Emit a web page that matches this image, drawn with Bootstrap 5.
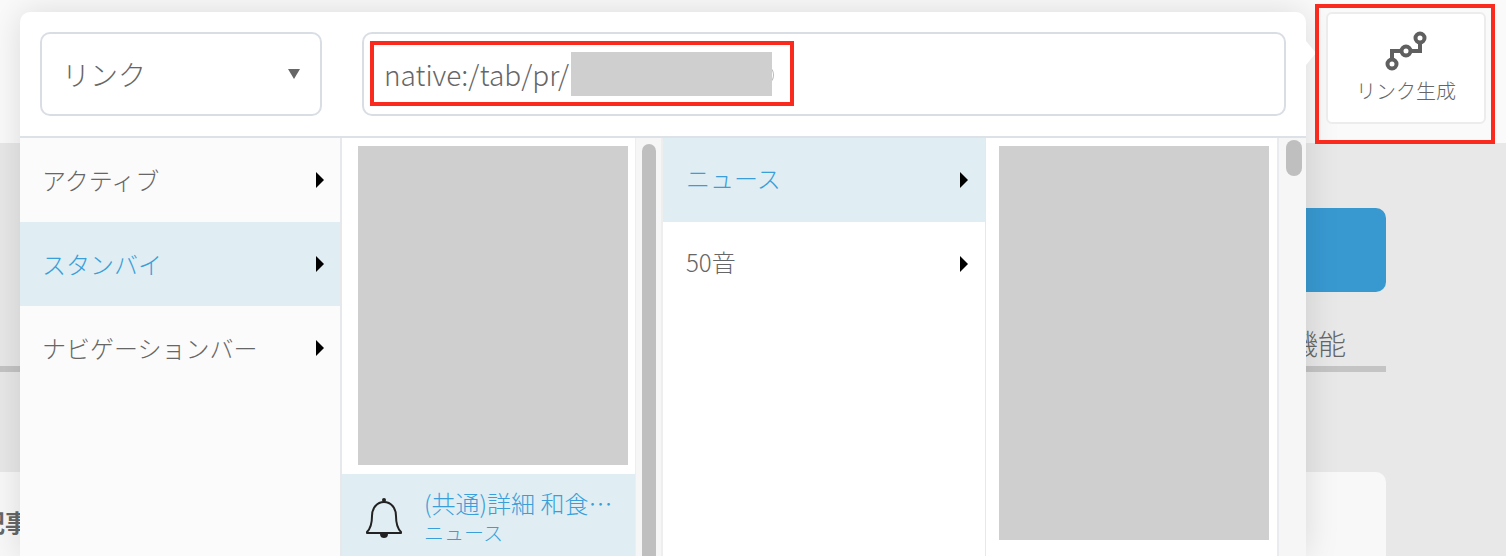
<!DOCTYPE html>
<html lang="ja">
<head>
  <meta charset="UTF-8" />
  <meta name="viewport" content="width=device-width, initial-scale=1.0" />
  <title>リンク生成</title>
  <link href="https://cdn.jsdelivr.net/npm/bootstrap@5.3.0/dist/css/bootstrap.min.css" rel="stylesheet" crossorigin="anonymous" />
  <style>
    html, body { height: 556px; overflow: hidden; }
    body { background: #e8e8e8; color: #666; font-family: "Noto Sans CJK JP", "Noto Sans", sans-serif; font-weight: 300; position: relative; }

    /* page behind the popover */
    .top-strip { height: 143px; background: #fafafa; }
    .back-main { padding: 65px 120px 0 0; }
    .back-btn { height: 84px; margin-left: 40px; background: #3899d1; border-radius: 10px; }
    .back-tabs { height: 80px; border-bottom: 6px solid #c4c4c4; font-size: 28px; line-height: 38px; padding: 32px 40px 0 0; }
    .back-card { margin: 100px 0 0 -20px; height: 200px; background: #f8f8f8; border-radius: 10px; font-size: 24px; font-weight: 700; padding-top: 30px; }
    .back-card span { display: block; margin-left: 1px; line-height: 40px; }

    /* link picker */
    .picker { position: absolute; left: 20px; top: 12px; width: 1286px; height: 544px; background: #fff; border-radius: 10px 10px 0 0; box-shadow: 0 0 34px rgba(0,0,0,.13); }
    .picker::after { content: ""; position: absolute; left: 100%; top: 29px; border-style: solid; border-width: 12px 0 12px 10px; border-color: transparent transparent transparent #fff; }
    .picker-head { height: 126px; padding: 20px; gap: 40px; border-bottom: 2px solid #dde2e8; }
    .type-select { width: 282px; height: 84px; border: 2px solid #d9dee5; border-radius: 10px; padding: 0 20px 0 20px; font-size: 28px; }
    .caret-down { width: 0; height: 0; border-style: solid; border-width: 10px 6px 0 6px; border-color: #666 transparent transparent transparent; }
    .url-box { height: 84px; border: 2px solid #d9dee5; border-radius: 10px; padding-left: 20px; font-size: 28px; }

    .picker-body { height: 418px; overflow: hidden; }
    .pane-root { width: 322px; background: #fbfbfb; border-right: 2px solid #e6e8ec; }
    .pane-tabs { width: 294px; padding-top: 8px; border-right: 1px solid #eee; }
    .pane-cats { width: 323px; border-right: 1px solid #e6e8ec; }
    .pane-preview { width: 291px; padding: 8px 8px 0 13px; }
    .menu-row { height: 84px; padding: 0 16px 0 22px; font-size: 24px; }
    .menu-row.picked, .tab-row { background: #e0edf3; color: #3a9fd8; }
    .pane-cats .menu-row { padding-left: 23px; padding-right: 17px; line-height: 1; }
    .pane-cats .menu-row span { margin-bottom: 4px; }
    .caret-right { width: 0; height: 0; border-style: solid; border-width: 8px 0 8px 8px; border-color: transparent transparent transparent #000; }
    .gray-mask { background: #cfcfcf; }
    .thumb-tabs { width: 270px; height: 319px; margin-left: 16px; }
    .tab-row { height: 90px; margin-top: 9px; padding-left: 23px; gap: 21px; }
    .tab-row svg { flex: none; margin-top: -3px; }
    .tab-text { padding-bottom: 4px; }
    .tab-title { font-size: 24px; line-height: 30px; }
    .tab-sub { font-size: 20px; line-height: 26px; margin-top: 2px; }
    .thumb-preview { width: 270px; height: 394px; }
    .scroll-track { background: #f6f6f6; }
    .track-a { width: 27px; padding: 6px 5px 0 6px; border-right: 2px solid #eee; }
    .track-b { width: 29px; padding: 2px 5px 0 7px; border-left: 2px solid #e9ebef; }
    .scroll-thumb { background: #bfbfbf; border-radius: 8px; }
    .thumb-long { height: 420px; }
    .thumb-short { height: 36px; width: 16px; }

    /* generate button */
    .gen-btn { position: absolute; left: 1326px; top: 12px; width: 160px; height: 112px; background: #fff; border: 2px solid #ececec; border-radius: 6px; font-size: 20px; color: #666; padding-top: 13px; }
    .gen-btn span { line-height: 28px; margin-top: 6px; }
    .gen-btn svg { margin-left: 2px; }

    /* annotation boxes and masks */
    .mark-box { position: absolute; border: 4px solid #fb2a1f; }
    .mark-url { left: 370px; top: 41px; width: 424px; height: 65px; }
    .mark-gen { left: 1315px; top: 4px; width: 180px; height: 140px; }
    .mask-url { position: absolute; left: 571px; top: 52px; width: 201px; height: 44px; }
    .mask-tail { position: absolute; left: 766px; top: 68px; width: 8px; height: 14px; border: 1px solid #bbb; border-radius: 50%; }
  </style>
</head>
<body>
  <div class="top-strip"></div>
  <div class="back-main">
    <div class="back-btn"></div>
    <div class="back-tabs text-end">機能</div>
    <div class="back-card"><span>記事</span></div>
  </div>

  <div class="picker">
    <div class="picker-head d-flex">
      <div class="type-select d-flex align-items-center justify-content-between flex-shrink-0">
        <span>リンク</span><i class="caret-down"></i>
      </div>
      <div class="url-box d-flex align-items-center flex-grow-1">native:/tab/pr/</div>
    </div>
    <div class="picker-body d-flex">
      <div class="pane-root flex-shrink-0">
        <div class="menu-row d-flex align-items-center justify-content-between"><span>アクティブ</span><i class="caret-right"></i></div>
        <div class="menu-row picked d-flex align-items-center justify-content-between"><span>スタンバイ</span><i class="caret-right"></i></div>
        <div class="menu-row d-flex align-items-center justify-content-between"><span>ナビゲーションバー</span><i class="caret-right"></i></div>
      </div>
      <div class="pane-tabs flex-shrink-0">
        <div class="thumb-tabs gray-mask"></div>
        <div class="tab-row d-flex align-items-center">
          <svg width="38" height="44" viewBox="0 0 38 44" fill="none" stroke="#222" stroke-width="2">
            <path d="M2 36c4-4 5-8 5-16 0-8 5-14 12-14s12 6 12 14c0 8 1 12 5 16v1H2z" stroke-linejoin="round"/>
            <circle cx="19" cy="4" r="2" fill="#222" stroke="none"/>
            <path d="M15 38c0 3 2 4 4 4s4-1 4-4z" fill="#222" stroke="none"/>
          </svg>
          <div class="tab-text text-nowrap">
            <div class="tab-title">(共通)詳細 和食…</div>
            <div class="tab-sub">ニュース</div>
          </div>
        </div>
      </div>
      <div class="scroll-track track-a flex-shrink-0"><div class="scroll-thumb thumb-long"></div></div>
      <div class="pane-cats flex-shrink-0">
        <div class="menu-row picked d-flex align-items-center justify-content-between"><span>ニュース</span><i class="caret-right"></i></div>
        <div class="menu-row d-flex align-items-center justify-content-between"><span>50音</span><i class="caret-right"></i></div>
      </div>
      <div class="pane-preview flex-shrink-0"><div class="thumb-preview gray-mask"></div></div>
      <div class="scroll-track track-b flex-grow-1"><div class="scroll-thumb thumb-short"></div></div>
    </div>
  </div>

  <div class="gen-btn d-flex flex-column align-items-center">
    <svg width="44" height="44" viewBox="0 0 44 44" fill="none" stroke="#5f5f5f" stroke-width="4">
      <circle cx="7" cy="37" r="4.5"/>
      <circle cx="21" cy="24" r="4.5"/>
      <circle cx="35" cy="11" r="4.5"/>
      <path d="M7 32v-8h9M26 24h9v-8"/>
    </svg>
    <span>リンク生成</span>
  </div>

  <div class="mask-tail"></div>
  <div class="gray-mask mask-url"></div>
  <div class="mark-box mark-url"></div>
  <div class="mark-box mark-gen"></div>
  <script src="https://cdn.jsdelivr.net/npm/bootstrap@5.3.0/dist/js/bootstrap.bundle.min.js" crossorigin="anonymous"></script>
</body>
</html>
